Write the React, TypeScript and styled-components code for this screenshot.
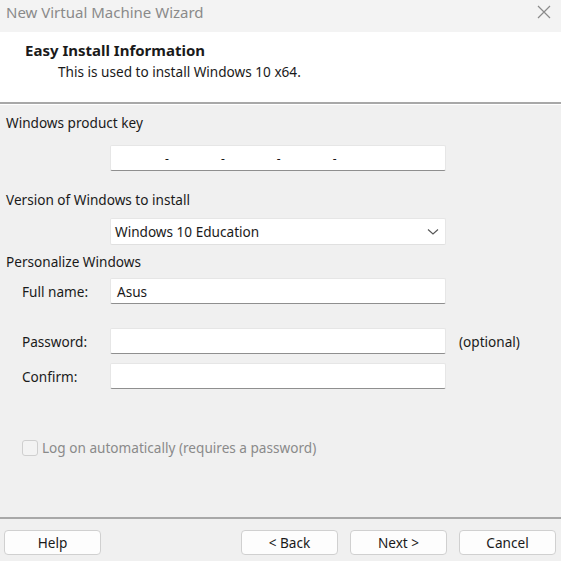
import React from "react";
import styled, { createGlobalStyle } from "styled-components";

const GlobalStyle = createGlobalStyle`
  html, body {
    margin: 0;
    padding: 0;
    background: #f0f0f0;
  }
  body {
    font-family: "Noto Sans", "Open Sans", sans-serif;
    font-size: 13.6px;
    color: #1a1a1a;
  }
`;

const Window = styled.div`
  width: 561px;
  height: 561px;
  display: flex;
  flex-direction: column;
  background: #f0f0f0;
  overflow: hidden;
`;

const TitleBar = styled.div`
  height: 32px;
  box-sizing: border-box;
  display: flex;
  align-items: flex-start;
  justify-content: space-between;
  padding: 2px 10px 0 6px;
  background: #f3f3f3;
  color: #8a8a8a;
  font-size: 15px;
  line-height: 20px;
`;

const CloseWrap = styled.span`
  display: flex;
  padding-top: 3px;
`;

const Header = styled.div`
  height: 72px;
  background: #ffffff;
  padding: 7px 0 0 25px;
  box-sizing: border-box;
  border-bottom: 2px solid #a8a8a8;
`;

const HeaderTitle = styled.div`
  font-weight: 700;
  font-size: 15px;
  line-height: 22px;
`;

const HeaderSub = styled.div`
  line-height: 20px;
  padding-left: 33px;
  margin-top: 1px;
`;

const Body = styled.div`
  flex: 1;
  padding: 8px 0 0 6px;
  border-top: 1px solid #ffffff;
`;

const SectionLabel = styled.div<{ $top?: number }>`
  line-height: 20px;
  margin-top: ${({ $top }) => $top ?? 0}px;
`;

const FieldRow = styled.div<{ $top: number }>`
  display: flex;
  align-items: center;
  margin-top: ${({ $top }) => $top}px;
`;

const FieldLabel = styled.div`
  width: 104px;
  padding-left: 16px;
  box-sizing: border-box;
`;

const Input = styled.div<{ $tall?: boolean }>`
  width: 336px;
  height: ${({ $tall }) => ($tall ? 27 : 26)}px;
  box-sizing: border-box;
  background: #ffffff;
  border: 1px solid #e6e6e6;
  border-bottom: 1px solid #8f8f8f;
  border-radius: 2px;
  display: flex;
  align-items: center;
  padding: 0 6px;
`;

const KeyInput = styled(Input)`
  padding: 0 0 0 54px;
  gap: 52px;
`;

const Dash = styled.span`
  font-size: 12px;
`;

const Select = styled(Input)`
  justify-content: space-between;
  border-bottom-color: #e0e0e0;
  padding: 0 6px 0 4px;
`;

const Hint = styled.div`
  margin-left: 13px;
`;

const CheckRow = styled.div`
  display: flex;
  align-items: center;
  gap: 4px;
  margin: 49px 0 0 16px;
  color: #8a8a8a;
`;

const CheckBox = styled.div`
  width: 16px;
  height: 16px;
  box-sizing: border-box;
  border: 1px solid #cfcfcf;
  border-radius: 3px;
  background: #f3f3f3;
`;

const Footer = styled.div`
  height: 44px;
  box-sizing: border-box;
  border-top: 2px solid #a8a8a8;
  padding: 11px 5px 0 4px;
  display: flex;
  align-items: flex-start;
  gap: 12px;
`;

const Button = styled.button<{ $push?: boolean }>`
  width: 97px;
  height: 25px;
  box-sizing: border-box;
  background: #fdfdfd;
  border: 1px solid #d0d0d0;
  border-radius: 4px;
  font-family: "Noto Sans", "Open Sans", sans-serif;
  font-size: 13.6px;
  color: #1a1a1a;
  padding: 0;
  margin-left: ${({ $push }) => ($push ? "auto" : "0")};
`;

const Chevron = () => (
  <svg width="12" height="8" viewBox="0 0 12 8">
    <path d="M1 1.5 L6 6 L11 1.5" fill="none" stroke="#555" strokeWidth="1.1" />
  </svg>
);

const CloseIcon = () => (
  <svg width="14" height="14" viewBox="0 0 14 14">
    <path d="M1 1 L13 13 M13 1 L1 13" stroke="#8a8a8a" strokeWidth="1.2" />
  </svg>
);

const App = () => (
  <>
    <GlobalStyle />
    <Window>
      <TitleBar>
        <span>New Virtual Machine Wizard</span>
        <CloseWrap>
          <CloseIcon />
        </CloseWrap>
      </TitleBar>
      <Header>
        <HeaderTitle>Easy Install Information</HeaderTitle>
        <HeaderSub>This is used to install Windows 10 x64.</HeaderSub>
      </Header>
      <Body>
        <SectionLabel>Windows product key</SectionLabel>
        <FieldRow $top={12}>
          <FieldLabel />
          <KeyInput>
            <Dash>-</Dash>
            <Dash>-</Dash>
            <Dash>-</Dash>
            <Dash>-</Dash>
          </KeyInput>
        </FieldRow>
        <SectionLabel $top={19}>Version of Windows to install</SectionLabel>
        <FieldRow $top={8}>
          <FieldLabel />
          <Select $tall>
            <span>Windows 10 Education</span>
            <Chevron />
          </Select>
        </FieldRow>
        <SectionLabel $top={7}>Personalize Windows</SectionLabel>
        <FieldRow $top={6}>
          <FieldLabel>Full name:</FieldLabel>
          <Input>Asus</Input>
        </FieldRow>
        <FieldRow $top={24}>
          <FieldLabel>Password:</FieldLabel>
          <Input />
          <Hint>(optional)</Hint>
        </FieldRow>
        <FieldRow $top={9}>
          <FieldLabel>Confirm:</FieldLabel>
          <Input />
        </FieldRow>
        <CheckRow>
          <CheckBox />
          <span>Log on automatically (requires a password)</span>
        </CheckRow>
      </Body>
      <Footer>
        <Button>Help</Button>
        <Button $push>&lt; Back</Button>
        <Button>Next &gt;</Button>
        <Button>Cancel</Button>
      </Footer>
    </Window>
  </>
);

export default App;
